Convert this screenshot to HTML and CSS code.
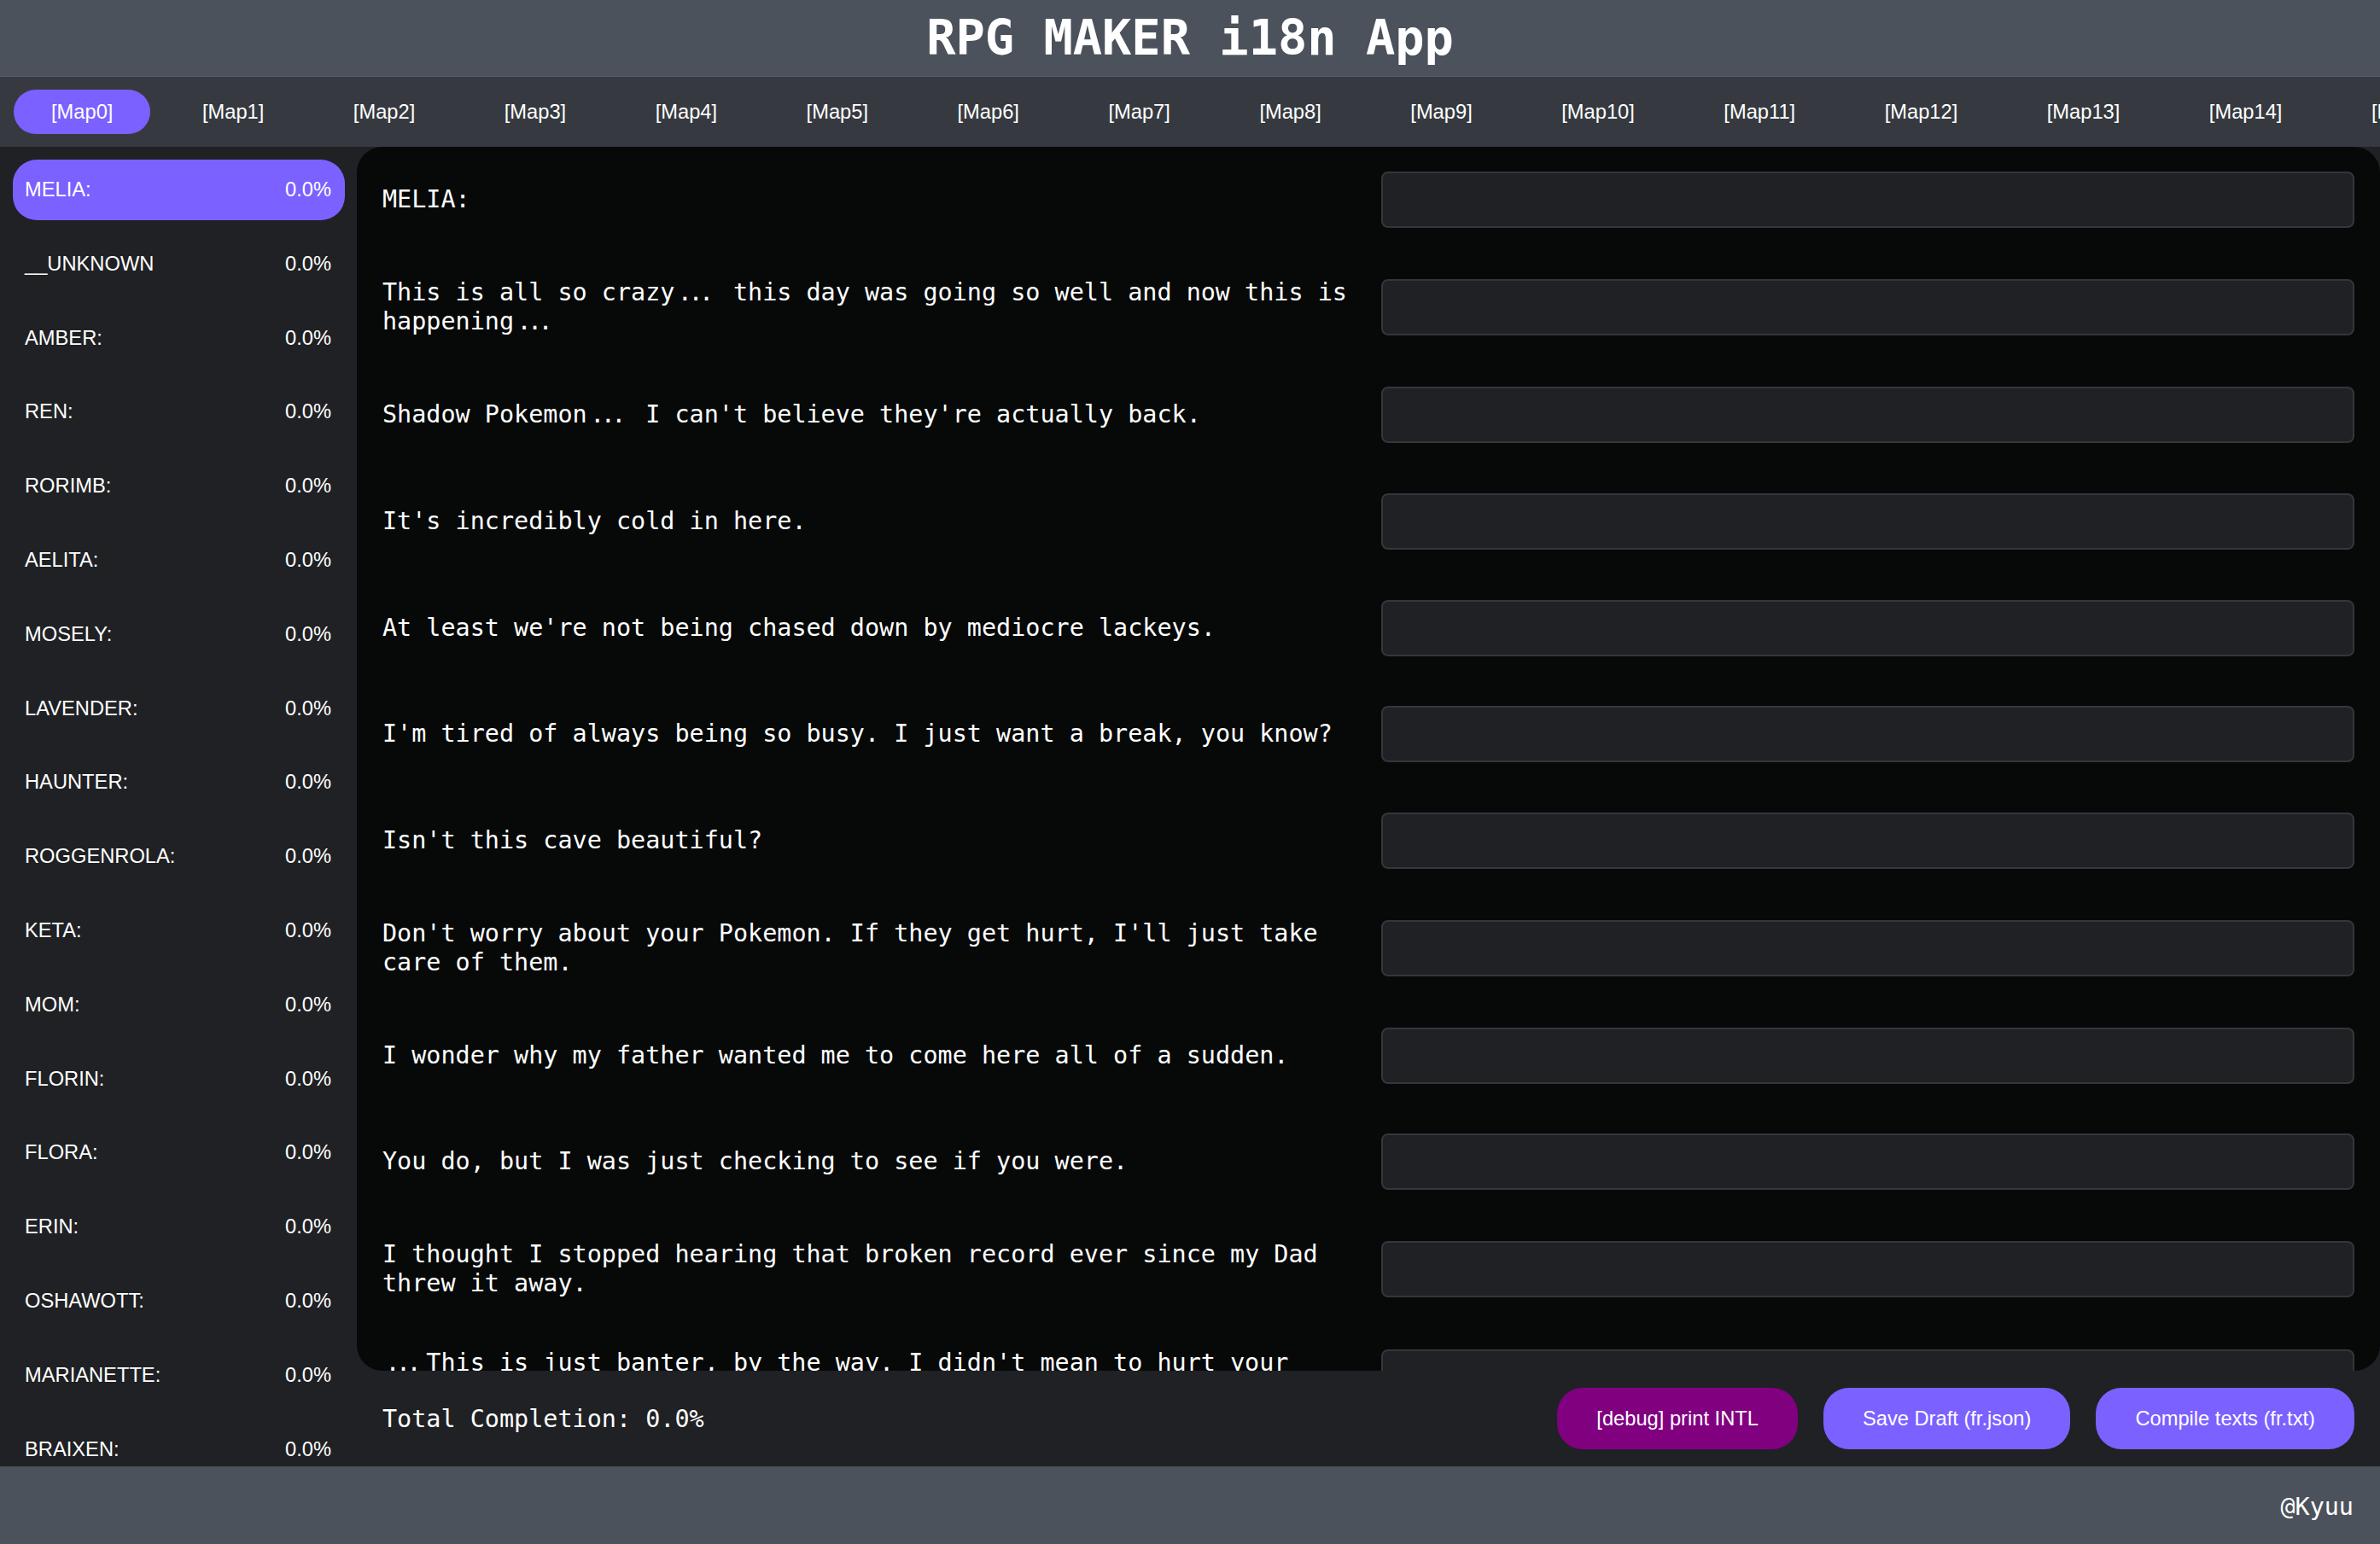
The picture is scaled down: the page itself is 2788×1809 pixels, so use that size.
FILE: index.html
```html
<!DOCTYPE html>
<html lang="en">
<head>
<meta charset="utf-8">
<title>RPG MAKER i18n App</title>
<link rel="stylesheet" href="styles.css">
</head>
<body>
<header class="app-header"><h1 class="app-title">RPG MAKER i18n App</h1></header>
<nav class="map-tabs">
  <button class="tab active">[Map0]</button>
  <button class="tab">[Map1]</button>
  <button class="tab">[Map2]</button>
  <button class="tab">[Map3]</button>
  <button class="tab">[Map4]</button>
  <button class="tab">[Map5]</button>
  <button class="tab">[Map6]</button>
  <button class="tab">[Map7]</button>
  <button class="tab">[Map8]</button>
  <button class="tab">[Map9]</button>
  <button class="tab">[Map10]</button>
  <button class="tab">[Map11]</button>
  <button class="tab">[Map12]</button>
  <button class="tab">[Map13]</button>
  <button class="tab">[Map14]</button>
  <button class="tab">[Map15]</button>
  <button class="tab">[Map16]</button>
</nav>
<div class="content">
  <aside class="sidebar">
    <div class="char active"><span>MELIA:</span><span>0.0%</span></div>
    <div class="char"><span>__UNKNOWN</span><span>0.0%</span></div>
    <div class="char"><span>AMBER:</span><span>0.0%</span></div>
    <div class="char"><span>REN:</span><span>0.0%</span></div>
    <div class="char"><span>RORIMB:</span><span>0.0%</span></div>
    <div class="char"><span>AELITA:</span><span>0.0%</span></div>
    <div class="char"><span>MOSELY:</span><span>0.0%</span></div>
    <div class="char"><span>LAVENDER:</span><span>0.0%</span></div>
    <div class="char"><span>HAUNTER:</span><span>0.0%</span></div>
    <div class="char"><span>ROGGENROLA:</span><span>0.0%</span></div>
    <div class="char"><span>KETA:</span><span>0.0%</span></div>
    <div class="char"><span>MOM:</span><span>0.0%</span></div>
    <div class="char"><span>FLORIN:</span><span>0.0%</span></div>
    <div class="char"><span>FLORA:</span><span>0.0%</span></div>
    <div class="char"><span>ERIN:</span><span>0.0%</span></div>
    <div class="char"><span>OSHAWOTT:</span><span>0.0%</span></div>
    <div class="char"><span>MARIANETTE:</span><span>0.0%</span></div>
    <div class="char"><span>BRAIXEN:</span><span>0.0%</span></div>
    <div class="char"><span>RAMOS:</span><span>0.0%</span></div>
  </aside>
  <main class="main">
    <section class="panel">
      <div class="row"><p class="src">MELIA:</p><input class="dst" type="text"></div>
      <div class="row"><p class="src">This is all so crazy<span class="ell">...</span> this day was going so well and now this is happening<span class="ell">...</span></p><input class="dst" type="text"></div>
      <div class="row"><p class="src">Shadow Pokemon<span class="ell">...</span> I can't believe they're actually back.</p><input class="dst" type="text"></div>
      <div class="row"><p class="src">It's incredibly cold in here.</p><input class="dst" type="text"></div>
      <div class="row"><p class="src">At least we're not being chased down by mediocre lackeys.</p><input class="dst" type="text"></div>
      <div class="row"><p class="src">I'm tired of always being so busy. I just want a break, you know?</p><input class="dst" type="text"></div>
      <div class="row"><p class="src">Isn't this cave beautiful?</p><input class="dst" type="text"></div>
      <div class="row"><p class="src">Don't worry about your Pokemon. If they get hurt, I'll just take care of them.</p><input class="dst" type="text"></div>
      <div class="row"><p class="src">I wonder why my father wanted me to come here all of a sudden.</p><input class="dst" type="text"></div>
      <div class="row"><p class="src">You do, but I was just checking to see if you were.</p><input class="dst" type="text"></div>
      <div class="row"><p class="src">I thought I stopped hearing that broken record ever since my Dad threw it away.</p><input class="dst" type="text"></div>
      <div class="row"><p class="src"><span class="ell">...</span>This is just banter, by the way. I didn't mean to hurt your feelings.</p><input class="dst" type="text"></div>
      <div class="row"><p class="src">Let's keep moving.</p><input class="dst" type="text"></div>
    </section>
    <div class="actions">
      <span class="total">Total Completion: 0.0%</span>
      <div class="buttons">
        <button class="btn debug">[debug] print INTL</button>
        <button class="btn">Save Draft (fr.json)</button>
        <button class="btn">Compile texts (fr.txt)</button>
      </div>
    </div>
  </main>
</div>
<footer class="app-footer"><span class="credit">@Kyuu</span></footer>
</body>
</html>
```

FILE: styles.css
```css
* { box-sizing: border-box; }

html, body {
  margin: 0;
  height: 100%;
}

body {
  display: flex;
  flex-direction: column;
  height: 100vh;
  overflow: hidden;
  background: #1f2124;
  color: #ffffff;
  font-family: "Liberation Sans", Arial, sans-serif;
}

.app-header {
  flex: 0 0 90px;
  display: flex;
  align-items: center;
  justify-content: center;
  background: #4b525c;
  border-bottom: 1px solid #59606a;
}

.app-title {
  margin: 0;
  font-family: "DejaVu Sans Mono", monospace;
  font-weight: bold;
  font-size: 57px;
  line-height: 1;
  color: #ffffff;
}

.map-tabs {
  flex: 0 0 82px;
  display: flex;
  align-items: center;
  gap: 16.5px;
  padding-left: 16px;
  background: #363a40;
  overflow: hidden;
}

.tab {
  flex: 0 0 auto;
  height: 52px;
  padding: 0 44px;
  border: none;
  border-radius: 26px;
  background: transparent;
  color: #ffffff;
  font-family: "Liberation Sans", Arial, sans-serif;
  font-size: 23.7px;
}

.tab.active { background: #7b61ff; }

.content {
  flex: 1 1 auto;
  min-height: 0;
  display: flex;
}

.sidebar {
  flex: 0 0 418px;
  display: flex;
  flex-direction: column;
  gap: 15.8px;
  padding: 15px 14px 0 15px;
  overflow: hidden;
  background: #1f2124;
}

.char {
  flex: 0 0 71px;
  display: flex;
  align-items: center;
  justify-content: space-between;
  padding: 0 16px 0 14px;
  border-radius: 28px;
  font-size: 23.7px;
  color: #ffffff;
}

.char.active { background: #7b61ff; }

.main {
  flex: 1 1 auto;
  min-width: 0;
  display: flex;
  flex-direction: column;
}

.panel {
  flex: 1 1 auto;
  min-height: 0;
  overflow: hidden;
  background: #070909;
  border-radius: 30px;
  padding: 0 30px;
}

.row {
  display: grid;
  grid-template-columns: 1fr 1fr;
  column-gap: 29px;
  align-items: center;
  padding: 29.4px 0;
}

.src {
  margin: 0;
  font-family: "DejaVu Sans Mono", monospace;
  font-size: 28.44px;
  line-height: 34px;
  color: #ffffff;
}

.ell {
  letter-spacing: -4.6px;
  padding: 0 10.35px 0 3.45px;
}

.dst {
  height: 66px;
  width: 100%;
  background: #1f2124;
  border: 2px solid #33373c;
  border-radius: 8px;
  color: #ffffff;
  font-size: 24px;
  padding: 0 16px;
}

.actions {
  flex: 0 0 112px;
  display: flex;
  align-items: center;
  justify-content: space-between;
  padding: 0 30px;
}

.total {
  font-family: "DejaVu Sans Mono", monospace;
  font-size: 28.44px;
  color: #ffffff;
}

.buttons {
  display: flex;
  gap: 30px;
}

.btn {
  height: 72px;
  padding: 0 46px;
  border: none;
  border-radius: 30px;
  background: #7b61ff;
  color: #ffffff;
  font-family: "Liberation Sans", Arial, sans-serif;
  font-size: 23.7px;
}

.btn.debug { background: #800080; }

.app-footer {
  flex: 0 0 91px;
  display: flex;
  align-items: center;
  justify-content: flex-end;
  padding: 4px 31px 0 0;
  background: #4b525c;
}

.credit {
  font-family: "DejaVu Sans Mono", monospace;
  font-size: 28.44px;
  color: #ffffff;
}
```
